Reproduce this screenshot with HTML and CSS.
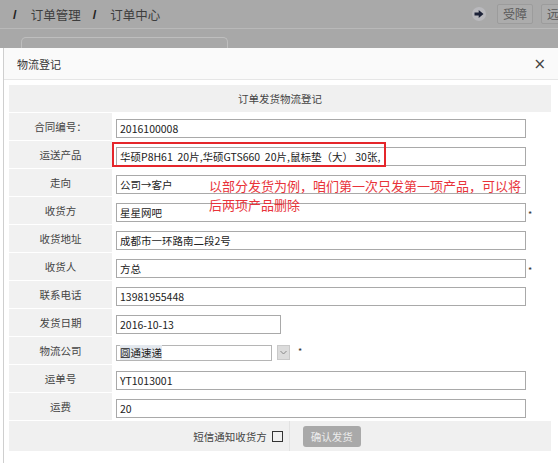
FILE: index.html
```html
<!DOCTYPE html>
<html>
<head>
<meta charset="utf-8">
<link rel="stylesheet" href="styles.css">
</head>
<body>
<div class="topbar">
  <div class="crumbs">
    <span class="sep">/</span><span class="crumb">订单管理</span><span class="sep">/</span><span class="crumb">订单中心</span>
  </div>
  <div class="tools">
    <span class="go"><svg width="14" height="14" viewBox="0 0 14 14"><circle cx="7" cy="7" r="7" fill="#b9b9bd"/><path d="M2.5 5.6h4.2V3l4.8 4-4.8 4V8.4H2.5z" fill="#1c2238"/></svg></span>
    <span class="tbtn">受障</span>
    <span class="tbtn last">远程</span>
  </div>
</div>
<div class="tabstrip"><div class="tab"></div></div>
<div class="modal">
  <div class="mhead"><span class="mtitle">物流登记</span><span class="close">×</span></div>
  <div class="mbody">
    <table class="form">
      <tr><td colspan="2" class="title">订单发货物流登记</td></tr>
      <tr><td class="lbl">合同编号：</td><td class="val"><span class="inp">2016100008</span></td></tr>
      <tr><td class="lbl">运送产品</td><td class="val hl"><span class="inp">华硕P8H61&nbsp; 20片,华硕GTS660&nbsp; 20片,鼠标垫（大） 30张,</span><span class="redbox"></span></td></tr>
      <tr><td class="lbl">走向</td><td class="val"><span class="inp">公司→客户</span></td></tr>
      <tr><td class="lbl">收货方</td><td class="val"><span class="inp">星星网吧</span><span class="star">*</span></td></tr>
      <tr><td class="lbl">收货地址</td><td class="val"><span class="inp">成都市一环路南二段2号</span></td></tr>
      <tr><td class="lbl">收货人</td><td class="val"><span class="inp">方总</span><span class="star">*</span></td></tr>
      <tr><td class="lbl">联系电话</td><td class="val"><span class="inp">13981955448</span></td></tr>
      <tr><td class="lbl">发货日期</td><td class="val"><span class="inp short">2016-10-13</span></td></tr>
      <tr><td class="lbl">物流公司</td><td class="val"><span class="sel"><span class="selbox"><span class="seltext">圆通速递</span></span><span class="selbtn"><svg width="7" height="5" viewBox="0 0 7 5"><path d="M0.5 1l3 3 3-3" fill="none" stroke="#888" stroke-width="1"/></svg></span></span><span class="star s2">*</span></td></tr>
      <tr><td class="lbl">运单号</td><td class="val"><span class="inp">YT1013001</span></td></tr>
      <tr><td class="lbl">运费</td><td class="val"><span class="inp">20</span></td></tr>
      <tr><td colspan="2" class="actions"><div class="actwrap"><span class="notify">短信通知收货方</span><span class="chk"></span><span class="vsep"></span><span class="submit">确认发货</span></div></td></tr>
    </table>
    <div class="note">以部分发货为例，咱们第一次只发第一项产品，可以将<br>后两项产品删除</div>
  </div>
</div>
</body>
</html>
```
FILE: styles.css
```css
* { box-sizing: border-box; }
html, body { margin: 0; padding: 0; background: #fff; }
body {
  width: 558px; height: 463px; overflow: hidden;
  font-family: "Noto Sans CJK SC", "Noto Sans", sans-serif;
  color: #333;
}
.topbar {
  height: 28px; background: #a9a9a9;
  display: flex; align-items: center; justify-content: space-between;
  overflow: hidden;
}
.crumbs { display: flex; align-items: center; font-size: 12.5px; color: #3d3d3d; padding-left: 13px; }
.sep { color: #222; font-family: "Liberation Sans", sans-serif; font-size: 13px; font-weight: bold; margin-right: 14px; }
.crumb { margin-right: 12px; }
.tools { display: flex; align-items: center; gap: 8px; flex-shrink: 0; width: 86px; }
.go { display: flex; margin-right: 3px; flex-shrink: 0; }
.tbtn {
  height: 20px; padding: 0 5px; border: 1px solid #9c9c9c; border-radius: 2px;
  background: #acacac; font-size: 12px; color: #595959; line-height: 18px;
  flex-shrink: 0;
}
.tabstrip {
  height: 20px; background: #a8a8a8; border-top: 1px solid #b9b9b9;
  padding-top: 8px;
}
.tab {
  margin-left: 21px; width: 207px; height: 11px;
  border: 1px solid #bebebe; border-bottom: none; border-radius: 5px 5px 0 0;
}
.modal { margin-left: 3px; border-left: 1px solid #cfcfcf; height: 420px; }
.mhead {
  height: 32px; background: #fafafa; border-bottom: 1px solid #e6e6e6;
  display: flex; align-items: center; justify-content: space-between;
  padding: 0 12px 0 13px;
}
.mtitle { font-size: 11px; color: #333; }
.close { font-family: "DejaVu Sans", sans-serif; font-size: 15px; color: #444; }
.mbody { position: relative; padding: 5px 0 0 5px; }
.form { border-collapse: separate; border-spacing: 0; width: 542px; }
.form td { padding: 0; }
.title {
  height: 27px; background: #f0f0f0; text-align: center;
  font-size: 10.5px; color: #444;
}
.lbl {
  width: 103px; height: 28px; background: #f1f1f1; border-top: 1px solid #fff;
  text-align: center; font-size: 10.5px; color: #444;
}
.val { padding-left: 4px !important; vertical-align: middle; background: #fff; }
.hl { position: relative; }
.inp {
  display: inline-block; vertical-align: middle;
  width: 410px; height: 19px; border: 1px solid #a9a9a9;
  padding: 0 3px; font-size: 10.5px; line-height: 17px; color: #222;
  white-space: nowrap; overflow: hidden;
}
.inp.short { width: 165px; }
.star { font-size: 9px; color: #333; vertical-align: middle; margin-left: 2px; position: relative; top: 2px; }
.star.s2 { margin-left: 8px; top: -1px; }
.redbox {
  position: absolute; left: 0; top: 2px; width: 274px; height: 25px;
  border: 2px solid #e5262b;
}
.sel { display: inline-flex; align-items: center; vertical-align: middle; gap: 5px; }
.selbox {
  width: 156px; height: 16px; border: 1px solid #b5b5b5;
  padding: 0 3px; font-size: 10.5px; line-height: 14px; color: #222;
}
.seltext { background: #e3e8ee; }
.selbtn {
  width: 13px; height: 15px; background: #dcdcdc; border: 1px solid #c9c9c9;
  display: flex; align-items: center; justify-content: center;
}
.actions { height: 31px; background: #f0f0f0; border-top: 1px solid #fff; }
.actwrap { display: flex; align-items: center; justify-content: center; height: 30px; padding-right: 6px; }
.notify { font-size: 10.5px; color: #444; }
.chk { width: 11px; height: 11px; border: 1px solid #333; margin-left: 5px; }
.vsep { width: 1px; height: 30px; background: #e2e2e2; margin: 0 13px 0 6px; }
.submit {
  width: 58px; height: 21px; border-radius: 3px; background: #a9a9a9;
  color: #ececec; font-size: 10.5px; text-align: center; line-height: 21px;
}
.note {
  position: absolute; left: 205px; top: 96px;
  font-size: 13px; line-height: 19px; color: #e8333a;
}
```
